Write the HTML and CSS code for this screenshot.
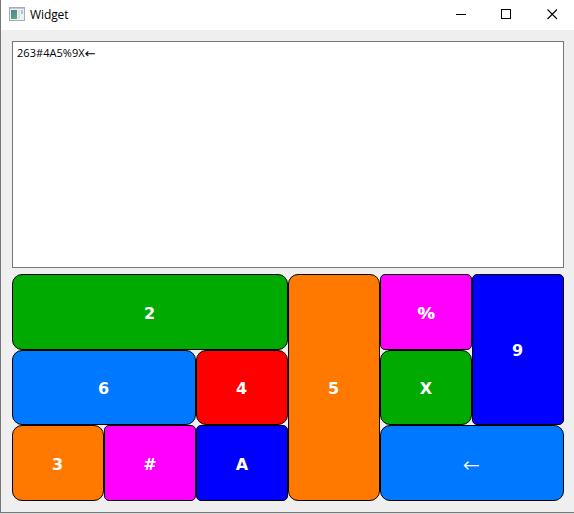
FILE: index.html
```html
<!DOCTYPE html>
<html lang="en">
<head>
<meta charset="utf-8">
<title>Widget</title>
<link rel="stylesheet" href="styles.css">
</head>
<body>
<div class="window">
  <header class="titlebar">
    <svg class="app-icon" width="16" height="14" viewBox="0 0 16 14">
      <defs><linearGradient id="pane" x1="0" y1="0" x2="0.4" y2="1"><stop offset="0" stop-color="#4f7f9c"/><stop offset="1" stop-color="#55a585"/></linearGradient></defs>
      <rect x=".5" y=".5" width="15" height="13" fill="#eef1f2" stroke="#a3adb5"/>
      <path d="M1 1.5H15" stroke="#bdc9d2"/>
      <rect x="2" y="3" width="6" height="9" fill="url(#pane)"/>
      <rect x="9" y="3" width="2" height="9" fill="#dce0e3"/>
      <rect x="12" y="3" width="2" height="4" fill="#b5c2c7"/>
    </svg>
    <h1 class="title">Widget</h1>
    <svg class="controls" width="102" height="12" viewBox="0 0 102 12" fill="none" stroke="#000">
      <path d="M0 5.5H10M45.5 .5H54.5V9.5H45.5Z" shape-rendering="crispEdges"/>
      <path d="M91.5 .5L101 10M101 .5L91.5 10" stroke-width="1.1"/>
    </svg>
  </header>
  <main class="content">
    <div class="output">263#4A5%9X<span class="output-arrow">←</span></div>
    <div class="keys">
      <button class="key green two">2</button>
      <button class="key orange five">5</button>
      <button class="key magenta percent"><span class="symbol">%</span></button>
      <button class="key navy nine">9</button>
      <button class="key blue six">6</button>
      <button class="key red four">4</button>
      <button class="key green ex">X</button>
      <button class="key orange three">3</button>
      <button class="key magenta hash">#</button>
      <button class="key navy letter-a">A</button>
      <button class="key blue back"><span class="arrow">←</span></button>
    </div>
  </main>
</div>
</body>
</html>
```

FILE: styles.css
```css
* { box-sizing: border-box; }
body { margin: 0; height: 514px; overflow: hidden; background: #d8d8d8; }
.window {
  height: 513px;
  display: flex;
  flex-direction: column;
  background: #efefef;
  border-left: 1px solid #777;
  border-bottom: 1px solid #777;
}
.titlebar {
  height: 30px;
  flex: none;
  display: flex;
  align-items: flex-start;
  padding: 7px 16px 0 8px;
  background: #fff;
}
.title {
  margin: 0 auto 0 5px;
  font: 12px/16px "Open Sans", "Noto Sans", sans-serif;
  letter-spacing: -0.1px;
  color: #000;
}
.controls { margin-top: 2px; }
.content {
  display: flex;
  flex-direction: column;
  gap: 6px;
  padding: 11px 10px 0 11px;
}
.output {
  height: 227px;
  padding: 3px 4px;
  background: #fff;
  border: 1px solid #777;
  font: 11px/16px "Open Sans", "Noto Sans", sans-serif;
  letter-spacing: 0.05px;
  color: #000;
}
.output-arrow { font: 13px/1 "DejaVu Sans", sans-serif; vertical-align: -1px; }
.keys {
  display: grid;
  grid-template-columns: repeat(6, 92px);
  grid-template-rows: 76px 75px 76px;
}
.key {
  margin: 0;
  padding: 2px 1px 0 0;
  border: 1px solid #000;
  border-radius: 10px;
  color: #fff;
  font: bold 16px/20px "DejaVu Sans", sans-serif;
}
.green { background: #00aa00; }
.orange { background: #ff7800; }
.blue { background: #0078ff; }
.red { background: #ff0000; }
.magenta { background: #ff00ff; border-radius: 5px; }
.navy { background: #0000ff; border-radius: 5px; }
.two, .three, .hash, .letter-a { padding-top: 4px; }
.percent, .ex, .hash, .letter-a { padding-right: 0; }
.two { grid-area: 1 / 1 / 2 / 4; }
.five { grid-area: 1 / 4 / 4 / 5; }
.percent { grid-area: 1 / 5; }
.nine { grid-area: 1 / 6 / 3 / 7; }
.six { grid-area: 2 / 1 / 3 / 3; }
.four { grid-area: 2 / 3; }
.ex { grid-area: 2 / 5; }
.three { grid-area: 3 / 1; }
.hash { grid-area: 3 / 2; }
.letter-a { grid-area: 3 / 3; }
.back { grid-area: 3 / 5 / 4 / 7; padding-top: 6px; }
.symbol { display: inline-block; font-family: "Open Sans", sans-serif; transform: scaleX(1.25); }
.arrow { font: 200 20px/20px "DejaVu Sans", sans-serif; -webkit-text-stroke: 0.3px #fff; }
```
